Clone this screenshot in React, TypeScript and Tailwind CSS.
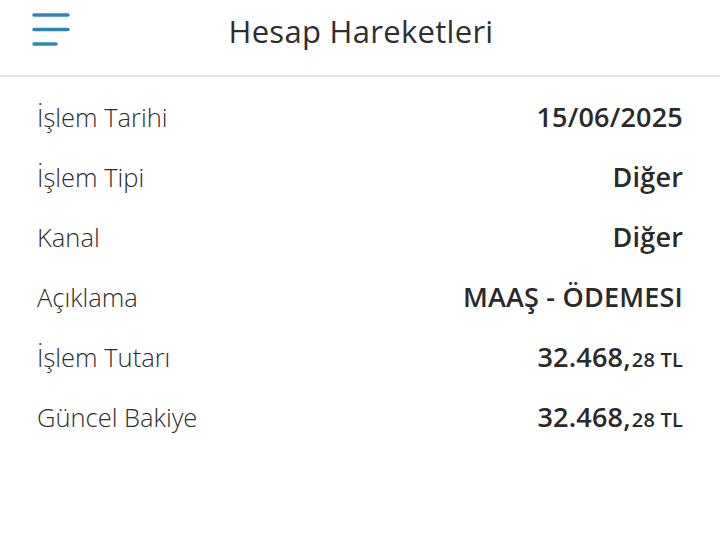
import React from 'react';

interface Row {
  label: string;
  value: string;
  cents?: string;
}

const rows: Row[] = [
  { label: 'İşlem Tarihi', value: '15/06/2025' },
  { label: 'İşlem Tipi', value: 'Diğer' },
  { label: 'Kanal', value: 'Diğer' },
  { label: 'Açıklama', value: 'MAAŞ - ÖDEMESI' },
  { label: 'İşlem Tutarı', value: '32.468,', cents: '28 TL' },
  { label: 'Güncel Bakiye', value: '32.468,', cents: '28 TL' },
];

function MenuIcon() {
  return (
    <svg width="40" height="36" viewBox="0 0 40 36" className="block">
      <g stroke="#2b87b9" strokeWidth="3.5" strokeLinecap="round">
        <line x1="3" y1="4" x2="37" y2="4" />
        <line x1="3" y1="18.5" x2="37" y2="18.5" />
        <line x1="3" y1="33" x2="25" y2="33" />
      </g>
    </svg>
  );
}

export default function App() {
  return (
    <div className="w-[720px] h-[560px] bg-white text-[#2e2e2e] font-['Open_Sans','Noto_Sans',sans-serif]">
      {/* header */}
      <div className="relative h-[77px] border-b-2 border-[#dfe5eb] flex items-center justify-center">
        <div className="absolute left-[31px] top-[11px]">
          <MenuIcon />
        </div>
        <h1 className="text-[31px] font-normal tracking-[0.3px] -mt-[12px] ml-[2px]">Hesap Hareketleri</h1>
      </div>

      {/* details */}
      <div className="pl-[37px] pr-[37px] pt-[10px] flex flex-col">
        {rows.map((row) => (
          <div key={row.label} className="h-[60px] flex items-center justify-between">
            <span className="text-[25.5px] font-light">{row.label}</span>
            <span className="text-[27px] font-semibold tracking-[0.2px] text-[#2a2a2a]">
              {row.value}
              {row.cents && <span className="text-[20px] ml-[1px]">{row.cents}</span>}
            </span>
          </div>
        ))}
      </div>
    </div>
  );
}
